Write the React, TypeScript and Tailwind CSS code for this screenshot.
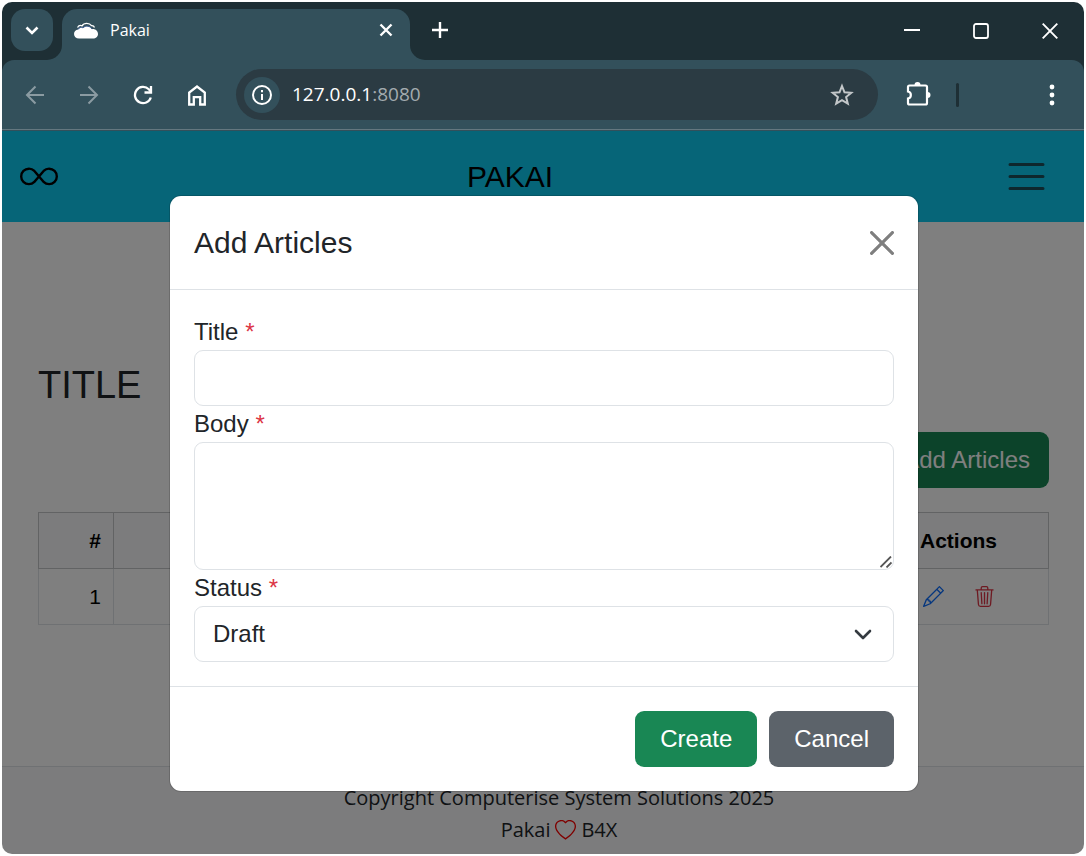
import type { ReactNode } from "react";
import { BsHeart, BsInfinity, BsPencil, BsTrash3 } from "react-icons/bs";

function IconButton({ label, className = "", children }: { label: string; className?: string; children: ReactNode }) {
  return (
    <button type="button" aria-label={label} className={`flex shrink-0 items-center justify-center ${className}`}>
      {children}
    </button>
  );
}

function TabStrip() {
  return (
    <div className="flex h-[58px] items-start bg-[#1e2f35] pl-[9px] pt-[7px] text-white">
      <IconButton label="Search tabs" className="h-[42px] w-[42px] rounded-[14px] bg-[#33505b]">
        <svg width="14" height="9" viewBox="0 0 14 9" fill="none" stroke="currentColor" strokeWidth="2.6">
          <path d="M1.5 1.5 7 7l5.5-5.5" />
        </svg>
      </IconButton>

      {/* Active tab, with flared feet on both sides */}
      <div className="relative ml-[9px] flex h-[51px] w-[348px] items-start rounded-t-[15px] bg-[#33505b] pl-3 pr-[17px] before:absolute before:bottom-0 before:-left-4 before:h-4 before:w-4 before:rounded-br-[15px] before:shadow-[0_0_0_8px_#33505b] before:[clip-path:inset(0)] after:absolute after:bottom-0 after:-right-4 after:h-4 after:w-4 after:rounded-bl-[15px] after:shadow-[0_0_0_8px_#33505b] after:[clip-path:inset(0)]">
        <div className="flex h-[42px] flex-1 items-center gap-3">
          <svg width="24" height="17" viewBox="0 0 24 17" fill="none">
            <path d="M3.5 5.5C5 3 7 3.3 8 3.8 10 .4 15.5.6 17.5 3.600c1.400-.2 2.500.6 3 1.900" stroke="#fff" strokeWidth="1.300" />
            <path d="M5 16.500C2 16.500 0 14.500 0 12c0-2.500 1.800-4.300 4-4.500 1-2 3.300-2.600 5-1.700 2.500-2.600 7.500-2 9 1.300 3.500-.4 6 2 6 4.900 0 2.500-2 4.500-5 4.500z" fill="#fff" />
            <path d="M4 7.500c1-2 3.300-2.600 5-1.700 2.500-2.600 7.500-2 9 1.300" stroke="#3d5f96" strokeWidth="1" />
          </svg>
          <span className="text-base">Pakai</span>
        </div>
        <IconButton label="Close tab" className="h-[42px]">
          <svg width="14" height="14" viewBox="0 0 14 14" fill="none" stroke="currentColor" strokeWidth="2.4">
            <path d="m1.500 1.500 11 11m0-11-11 11" />
          </svg>
        </IconButton>
      </div>

      <IconButton label="New tab" className="ml-[22px] h-[42px]">
        <svg width="16" height="16" viewBox="0 0 16 16" fill="none" stroke="currentColor" strokeWidth="2.400">
          <path d="M8 0v16M0 8h16" />
        </svg>
      </IconButton>

      <div className="ml-auto flex h-[44px] items-center gap-[53px] pr-[26px]">
        <IconButton label="Minimize">
          <svg width="16" height="16" viewBox="0 0 16 16" fill="none" stroke="currentColor" strokeWidth="2">
            <path d="M0 7h16" />
          </svg>
        </IconButton>
        <IconButton label="Maximize">
          <svg width="16" height="16" viewBox="0 0 16 16" fill="none" stroke="currentColor" strokeWidth="1.800">
            <rect x="1" y="1" width="14" height="14" rx="2" />
          </svg>
        </IconButton>
        <IconButton label="Close">
          <svg width="16" height="16" viewBox="0 0 16 16" fill="none" stroke="currentColor" strokeWidth="1.900">
            <path d="m.7.7 14.600 14.600m0-14.600L.7 15.300" />
          </svg>
        </IconButton>
      </div>
    </div>
  );
}

function Toolbar() {
  return (
    <div className="bg-[#1e2f35]">
      <div className="flex h-[71px] flex-col rounded-t-xl border-b border-[#33505b] bg-[#33505b] text-white">
        <div className="flex flex-1 items-center border-b border-[#64777f] pl-[23px] pr-5">
          <IconButton label="Back" className="text-[#8b9ba2]">
            <svg width="20" height="20" viewBox="0 0 20 20" fill="none" stroke="currentColor" strokeWidth="2">
              <path d="M19 10H2M10.500 1.500 2 10l8.500 8.500" />
            </svg>
          </IconButton>
          <IconButton label="Forward" className="ml-[34px] text-[#8b9ba2]">
            <svg width="20" height="20" viewBox="0 0 20 20" fill="none" stroke="currentColor" strokeWidth="2">
              <path d="M1 10h17M9.500 1.500 18 10l-8.500 8.500" />
            </svg>
          </IconButton>
          <IconButton label="Reload" className="ml-[34px]">
            <svg width="20" height="20" viewBox="0 0 20 20" fill="none" stroke="currentColor" strokeWidth="2.300">
              <path d="M17.800 12.500A8.100 8.100 0 1 1 15.800 4.300l2 2.200" />
              <path d="M18 1v6.500h-6.500" />
            </svg>
          </IconButton>
          <IconButton label="Home" className="ml-[34px]">
            <svg width="20" height="22" viewBox="0 0 20 22" fill="none" stroke="currentColor" strokeWidth="2.300">
              <path d="M2.200 20.500V8.500l7.800-6 7.800 6v12h-4.600v-7.300H6.800v7.300z" />
            </svg>
          </IconButton>

          <div className="ml-[29px] flex h-[51px] min-w-0 flex-1 items-center rounded-full bg-[#2b3b43] pl-2 pr-6">
            <IconButton label="View site information" className="h-9 w-9 rounded-full bg-[#33505b]">
              <svg width="20" height="20" viewBox="0 0 20 20" fill="none" stroke="currentColor" strokeWidth="2">
                <circle cx="10" cy="10" r="9" />
                <path d="M10 9v6M10 5v2.200" />
              </svg>
            </IconButton>
            <div className="ml-3 flex-1 text-[19px]">
              127.0.0.1<span className="text-[#a3abaf]">:8080</span>
            </div>
            <IconButton label="Bookmark this tab" className="text-[#c3c7c9]">
              <svg width="24" height="24" viewBox="0 0 24 24" fill="none" stroke="currentColor" strokeWidth="2">
                <path d="m12 3 2.500 6.300 6.800.5-5.200 4.300 1.700 6.600L12 17.100l-5.800 3.600 1.700-6.600-5.200-4.300 6.800-.5z" />
              </svg>
            </IconButton>
          </div>

          <IconButton label="Extensions" className="ml-[28px]">
            <svg width="25" height="26" viewBox="0 0 25 26" fill="none">
              <path d="M3.500 3.500h16A1.500 1.500 0 0 1 21 5v16a1.500 1.500 0 0 1-1.500 1.500h-16A1.500 1.500 0 0 1 2 21v-4.500c3.800-.6 3.800-6.400 0-7V5a1.500 1.500 0 0 1 1.500-1.500z" stroke="currentColor" strokeWidth="2.200" />
              <path d="M8.500 3a3 3 0 0 1 6 0zM21.500 10a3 3 0 0 1 0 6z" fill="currentColor" />
            </svg>
          </IconButton>
          <div className="ml-[25px] h-6 w-[3px] rounded-full bg-[#1e2f35]" />
          <IconButton label="Browser menu" className="ml-[81px] h-6 w-6">
            <svg width="6" height="22" viewBox="0 0 6 22" fill="currentColor">
              <circle cx="3" cy="3" r="2.400" />
              <circle cx="3" cy="11" r="2.400" />
              <circle cx="3" cy="19" r="2.400" />
            </svg>
          </IconButton>
        </div>
      </div>
    </div>
  );
}

function Navbar() {
  return (
    <nav className="flex h-[91px] items-center justify-between bg-[#0dcaf0] pl-[18px] pr-[35px] text-black">
      <a href="#" aria-label="Home">
        <BsInfinity size={38} />
      </a>
      <a href="#" className="text-[30px]">PAKAI</a>
      <button type="button" aria-label="Toggle navigation" className="flex w-[87px] justify-end text-[#212529]/75">
        <svg width="45" height="45" viewBox="0 0 30 30" stroke="currentColor" strokeWidth="2" strokeLinecap="round">
          <path d="M4 7h22M4 15h22M4 23h22" />
        </svg>
      </button>
    </nav>
  );
}

function Articles() {
  return (
    <main className="flex-1 px-9 pr-[35px] pt-[138px] text-[#212529]">
      <h1 className="text-[38px] leading-[50px]">TITLE</h1>
      <div className="mt-[22px] flex justify-end">
        <button type="button" className="h-14 rounded-[9px] bg-[#198754] px-[19px] text-2xl text-white">
          Add Articles
        </button>
      </div>
      <table className="mt-6 w-full border-collapse text-[21px] text-black">
        <thead>
          <tr className="h-14 bg-[#f8f9fa]">
            <th className="w-[75px] border border-[#c4c6c8] px-3 text-right">#</th>
            <th className="border border-[#c4c6c8] px-3 text-center">Title</th>
            <th className="w-[180px] border border-[#c4c6c8] px-3 text-center">Actions</th>
          </tr>
        </thead>
        <tbody>
          <tr className="h-14">
            <td className="border border-[#dee2e6] px-3 text-right">1</td>
            <td className="border border-[#dee2e6] px-3" />
            <td className="border border-[#dee2e6] px-3">
              <div className="flex items-center justify-center gap-[30px]">
                <a href="#" aria-label="Edit" className="text-[#0d6efd]"><BsPencil size={21} /></a>
                <a href="#" aria-label="Delete" className="text-[#dc3545]"><BsTrash3 size={21} /></a>
              </div>
            </td>
          </tr>
        </tbody>
      </table>
    </main>
  );
}

function Footer() {
  return (
    <footer className="flex flex-col items-center border-t border-[#dee2e6] bg-[#f8f9fa] pb-2 pl-8 pt-[15px] font-['Open_Sans',sans-serif] text-[20px] leading-8 text-[#212529]">
      <p>Copyright Computerise System Solutions 2025</p>
      <p className="flex items-center gap-[5px]">
        Pakai <BsHeart size={21} className="text-[#ff0000]" /> B4X
      </p>
    </footer>
  );
}

function FieldLabel({ htmlFor, children }: { htmlFor: string; children: ReactNode }) {
  return (
    <label htmlFor={htmlFor} className="block h-9 leading-9">
      {children} <span className="text-[#dc3545]">*</span>
    </label>
  );
}

function AddArticleModal() {
  return (
    <div className="absolute inset-0 flex items-start justify-center bg-black/50 pl-[2px] pt-[65px]">
      <form
        role="dialog"
        aria-labelledby="modal-title"
        className="w-[748px] max-w-full rounded-[11px] bg-white text-2xl text-[#212529] shadow-[0_0_0_1px_rgba(0,0,0,0.15)]"
      >
        <div className="flex h-[94px] items-center justify-between border-b border-[#dee2e6] px-6">
          <h2 id="modal-title" className="text-[30px]">Add Articles</h2>
          <IconButton label="Close dialog" className="text-black/50">
            <svg width="24" height="24" viewBox="0 0 24 24" stroke="currentColor" strokeWidth="3.200" strokeLinecap="round">
              <path d="m1.600 1.600 20.800 20.800m0-20.800L1.600 22.400" />
            </svg>
          </IconButton>
        </div>

        <div className="p-6">
          <FieldLabel htmlFor="title">Title</FieldLabel>
          <input id="title" type="text" className="block h-14 w-full rounded-[9px] border border-[#dee2e6] px-[18px] outline-none" />
          <FieldLabel htmlFor="body">Body</FieldLabel>
          <div className="relative">
            <textarea
              id="body"
              className="block h-32 w-full resize-y rounded-[9px] border border-[#dee2e6] px-[18px] py-2 outline-none [&::-webkit-resizer]:bg-transparent"
            />
            <svg className="pointer-events-none absolute bottom-[2px] right-[2px]" width="12" height="12" viewBox="0 0 12 12" stroke="#555" strokeWidth="1.800">
              <path d="M.5 11 11 .5M6.500 11.500l5-5" />
            </svg>
          </div>
          <FieldLabel htmlFor="status">Status</FieldLabel>
          <div className="relative">
            <select id="status" className="block h-14 w-full appearance-none rounded-[9px] border border-[#dee2e6] bg-white px-[18px] outline-none">
              <option>Draft</option>
              <option>Published</option>
            </select>
            <svg className="pointer-events-none absolute right-[22px] top-[23px]" width="18" height="11" viewBox="0 0 18 11" fill="none" stroke="#343a40" strokeWidth="2.600" strokeLinecap="round" strokeLinejoin="round">
              <path d="m2 2 7 7 7-7" />
            </svg>
          </div>
        </div>

        <div className="flex justify-end gap-3 border-t border-[#dee2e6] p-6 text-white">
          <button type="submit" className="h-14 rounded-[9px] bg-[#198754] px-[25px]">Create</button>
          <button type="button" className="h-14 rounded-[9px] bg-[#5c636a] px-[25px]">Cancel</button>
        </div>
      </form>
    </div>
  );
}

export default function App() {
  return (
    <div className="flex min-h-screen bg-white p-[2px]">
      <div className="flex flex-1 flex-col overflow-hidden rounded-[10px] font-['Open_Sans',sans-serif]">
        <TabStrip />
        <Toolbar />
        <div className="relative flex flex-1 flex-col bg-white font-['Liberation_Sans',Arial,sans-serif]">
          <Navbar />
          <Articles />
          <Footer />
          <AddArticleModal />
        </div>
      </div>
    </div>
  );
}
